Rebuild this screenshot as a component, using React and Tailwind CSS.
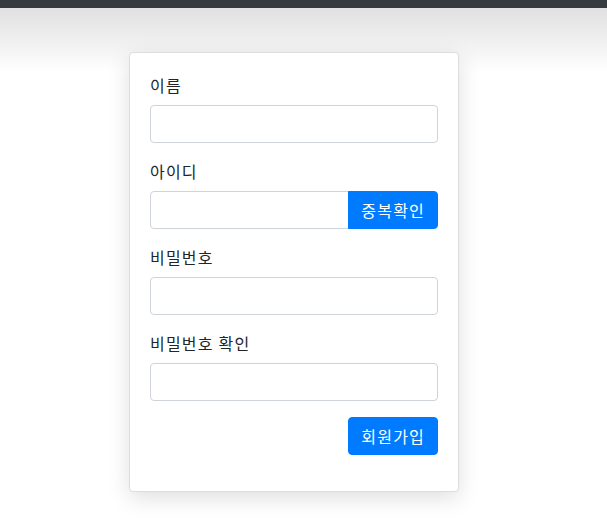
const Field = ({ label, children }) => (
    <div className="mb-4">
        <label className="block mb-2 text-base leading-6 tracking-[1.2px] text-[#212529]">{label}</label>
        {children}
    </div>
)

const inputCls = "block w-full h-[38px] px-3 border border-[#ced4da] bg-white text-base text-[#495057] outline-none"

export default function App() {
    return (
        <div
            className="min-h-screen bg-[linear-gradient(to_bottom,#dcdcdc_0px,#ffffff_72px)] bg-no-repeat"
            style={{ fontFamily: '"Noto Sans CJK KR", "Noto Sans", sans-serif' }}
        >
            {/* top navbar strip */}
            <div className="h-2 bg-[#343a40]" />

            <div className="pt-[44px] pl-[129px]">
                <form className="w-[330px] bg-white border border-[#dddddd] rounded px-5 pt-5 pb-5 shadow-[0_6px_22px_rgba(0,0,0,0.13)]">
                    <Field label="이름">
                        <input type="text" className={`${inputCls} rounded`} />
                    </Field>

                    <Field label="아이디">
                        <div className="flex">
                            <input type="text" className={`${inputCls} rounded-l rounded-r-none`} />
                            <button
                                type="button"
                                className="shrink-0 h-[38px] px-3 bg-[#007bff] text-white text-base tracking-[1.2px] rounded-r -ml-px border border-[#007bff]"
                            >
                                중복확인
                            </button>
                        </div>
                    </Field>

                    <Field label="비밀번호">
                        <input type="password" className={`${inputCls} rounded`} />
                    </Field>

                    <Field label="비밀번호 확인">
                        <input type="password" className={`${inputCls} rounded`} />
                    </Field>

                    <div className="flex justify-end mb-4">
                        <button
                            type="button"
                            className="h-[38px] px-3 bg-[#007bff] text-white text-base tracking-[1.2px] rounded border border-[#007bff]"
                        >
                            회원가입
                        </button>
                    </div>
                </form>
            </div>
        </div>
    )
}
